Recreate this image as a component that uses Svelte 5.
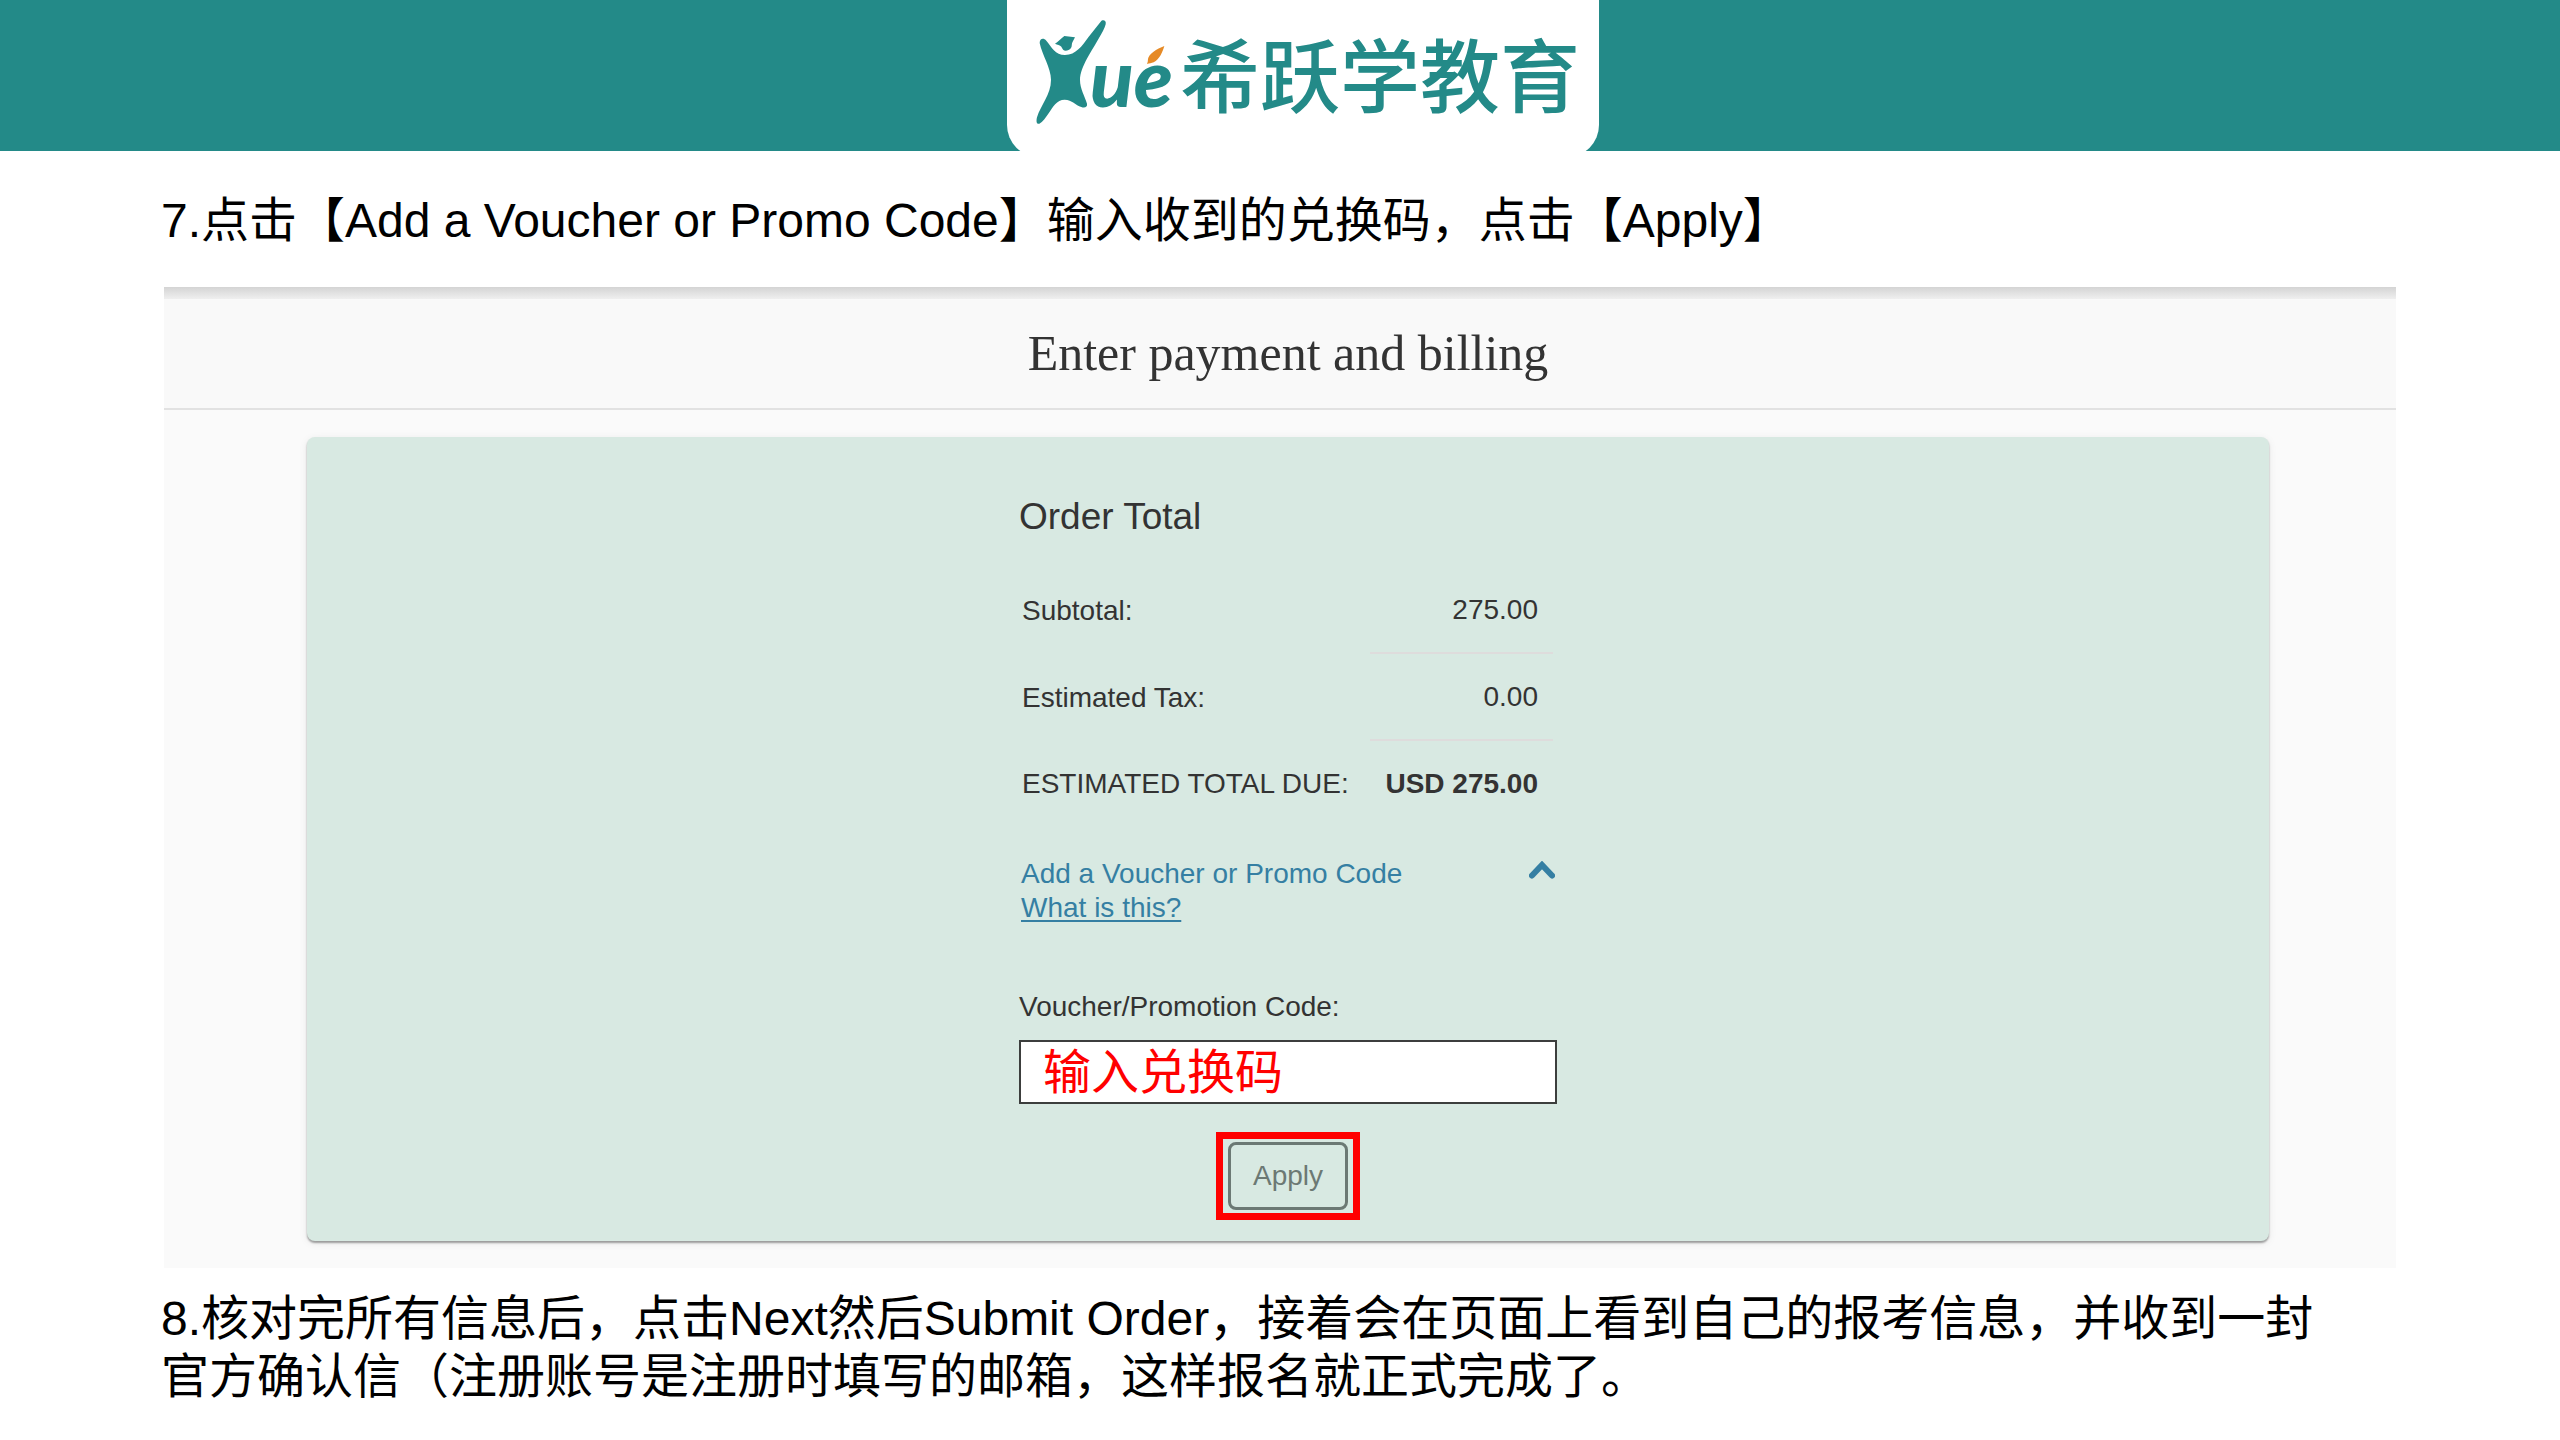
<script lang="ts">
  interface OrderRow {
    label: string;
    amount: string;
    total?: boolean;
  }

  const rows: OrderRow[] = [
    { label: 'Subtotal:', amount: '275.00' },
    { label: 'Estimated Tax:', amount: '0.00' },
    { label: 'ESTIMATED TOTAL DUE:', amount: 'USD 275.00', total: true },
  ];

  let voucherOpen = $state(true);
  let code = $state('输入兑换码');
</script>

<header class="banner">
  <div class="brand">
    <svg class="brand-mark" viewBox="0 0 435 375" role="img" aria-label="Xué">
      <!-- Graduate figure -->
      <path
        class="teal"
        d="M59 99C59 86 70 82 79 92C94 110 106 135 135 135C168 135 186 108 205 82L242 35C248 27 260 31 257 43C254 56 245 70 237 84C220 116 180 170 180 210C180 236 194 258 201 281C203 291 194 295 184 291C166 286 157 269 134 269C110 269 98 292 87 308C77 323 68 336 58 341C50 344 48 335 51 322C62 285 93 254 93 209C93 174 66 134 59 99Z"
      />
      <path
        class="teal"
        d="M105 101C115 95 123 85 133 78L165 82L158 95C154 100 157 108 153 114C149 120 143 122 137 122C131 122 127 117 124 110C120 105 112 104 105 101Z"
      />
      <text class="brand-latin teal" x="210" y="291">ue</text>
      <!-- Leaf accent over the e -->
      <path class="leaf" d="M433 108C410 117 386 132 384 147C384 153 383 158 381 162C388 160 394 160 401 157C419 148 428 125 433 108Z" />
    </svg>
    <span class="brand-name">希跃学教育</span>
  </div>
</header>

<main>
  <p class="step">7.点击【Add a Voucher or Promo Code】输入收到的兑换码，点击【Apply】</p>

  <section class="checkout">
    <div class="checkout-header">
      <h1>Enter payment and billing</h1>
    </div>

    <div class="card">
      <div class="order">
        <h2>Order Total</h2>

        <table>
          <tbody>
            {#each rows as row (row.label)}
              <tr class:total={row.total}>
                <th scope="row">{row.label}</th>
                <td>{row.amount}</td>
              </tr>
            {/each}
          </tbody>
        </table>

        <div class="voucher-links">
          <button
            class="voucher-toggle"
            type="button"
            aria-expanded={voucherOpen}
            onclick={() => (voucherOpen = !voucherOpen)}
          >
            Add a Voucher or Promo Code
            <svg class="chevron" class:closed={!voucherOpen} viewBox="0 0 26 18" aria-hidden="true">
              <path d="M3 14.5L13 4L23 14.5" />
            </svg>
          </button>
          <a href="#voucher">What is this?</a>
        </div>

        {#if voucherOpen}
          <form class="voucher-form" onsubmit={(e) => e.preventDefault()}>
            <label for="voucher">Voucher/Promotion Code:</label>
            <input id="voucher" type="text" bind:value={code} />
            <div class="highlight">
              <button class="apply" type="submit">Apply</button>
            </div>
          </form>
        {/if}
      </div>
    </div>
  </section>

  <p class="step">
    8.核对完所有信息后，点击Next然后Submit Order，接着会在页面上看到自己的报考信息，并收到一封官方确认信（注册账号是注册时填写的邮箱，这样报名就正式完成了。
  </p>
</main>

<style>
  :global(body) {
    margin: 0;
    background: #fff;
    font-family: 'Liberation Sans', 'Noto Sans CJK SC', sans-serif;
  }

  /* Banner */
  .banner {
    display: flex;
    justify-content: center;
    align-items: flex-start;
    height: 151px;
    padding-left: 46px;
    background: #238a88;
    overflow: hidden;
  }

  .brand {
    display: flex;
    align-items: flex-start;
    box-sizing: border-box;
    width: 592px;
    height: 157px;
    padding: 10px 0 0 13px;
    border-radius: 0 0 32px 32px;
    background: #fff;
  }

  .brand-mark {
    flex: none;
    width: 145px;
    height: 125px;
    margin-right: 15px;
    overflow: visible;
  }

  .teal {
    fill: #238a88;
  }

  .leaf {
    fill: #e68a26;
  }

  .brand-latin {
    font-family: Lato, sans-serif;
    font-size: 240px;
    font-style: italic;
    font-weight: 900;
  }

  .brand-name {
    color: #238a88;
    font-family: 'Noto Sans CJK SC', sans-serif;
    font-size: 80px;
    font-weight: 500;
    line-height: 122px;
    white-space: nowrap;
  }

  /* Instructions */
  main {
    padding: 41px 164px 32px;
  }

  .step {
    margin: 0 50px 0 -3px;
    color: #000;
    font-size: 48px;
    line-height: 58px;
  }

  /* Checkout panel */
  .checkout {
    margin: 37px 0 22px;
    padding-bottom: 27px;
    background: #fafafa;
    color: #333;
    font-size: 28px;
    line-height: 34px;
  }

  .checkout-header {
    padding: 36px 0 25px 16px;
    border-bottom: 2px solid #e2e2e2;
    background: linear-gradient(#d4d4d4, #efefef 12px, #f9f9f9 12px);
    text-align: center;
  }

  h1 {
    margin: 0;
    font-family: 'Liberation Serif', serif;
    font-size: 50px;
    font-weight: 400;
    line-height: 60px;
  }

  .card {
    display: flex;
    justify-content: center;
    margin: 27px 127px 0 143px;
    padding: 58px 0 21px;
    border-radius: 8px;
    background: #d8e9e2;
    box-shadow: 0 2px 2px rgba(0, 0, 0, 0.35), 0 2px 8px rgba(0, 0, 0, 0.08);
  }

  .order {
    width: 538px;
  }

  h2 {
    margin: 0 0 28px;
    font-size: 37px;
    font-weight: 400;
    line-height: 44px;
  }

  table {
    width: 534px;
    border-collapse: separate;
    border-spacing: 0;
  }

  th,
  td {
    height: 85px;
    padding: 0;
    font-weight: 400;
  }

  th {
    padding-left: 3px;
    text-align: left;
  }

  td {
    width: 152px;
    padding: 0 15px;
    border-bottom: 2px solid #dedcdc;
    text-align: right;
    white-space: nowrap;
  }

  .total td {
    border-bottom: 0;
    font-weight: 700;
  }

  /* Voucher */
  .voucher-links {
    margin: 31px 0 65px;
    padding: 0 2px;
    color: #357fa3;
  }

  .voucher-toggle {
    display: flex;
    align-items: center;
    justify-content: space-between;
    width: 100%;
    padding: 0;
    border: 0;
    background: none;
    color: inherit;
    font: inherit;
    cursor: pointer;
  }

  .voucher-links a {
    display: block;
    width: fit-content;
    color: inherit;
    text-decoration-thickness: 2px;
    text-underline-offset: 3px;
  }

  .chevron {
    width: 26px;
    height: 18px;
    margin-bottom: 8px;
    fill: none;
    stroke: currentColor;
    stroke-width: 6;
    stroke-linecap: round;
  }

  .chevron.closed {
    transform: rotate(180deg);
  }

  .voucher-form {
    display: flex;
    flex-direction: column;
  }

  .voucher-form input {
    box-sizing: border-box;
    width: 100%;
    height: 64px;
    margin: 16px 0 28px;
    padding: 0 22px 8px;
    border: 2px solid #3c3e3d;
    border-radius: 0;
    background: #fff;
    color: #f00;
    font: inherit;
    font-size: 48px;
  }

  .highlight {
    align-self: center;
    padding: 3px 5px;
    border: 7px solid #f00;
  }

  .apply {
    display: block;
    width: 120px;
    height: 68px;
    padding: 0;
    border: 3px solid #6c7974;
    border-radius: 8px;
    background: none;
    color: #6c7974;
    font: inherit;
    cursor: pointer;
  }
</style>
